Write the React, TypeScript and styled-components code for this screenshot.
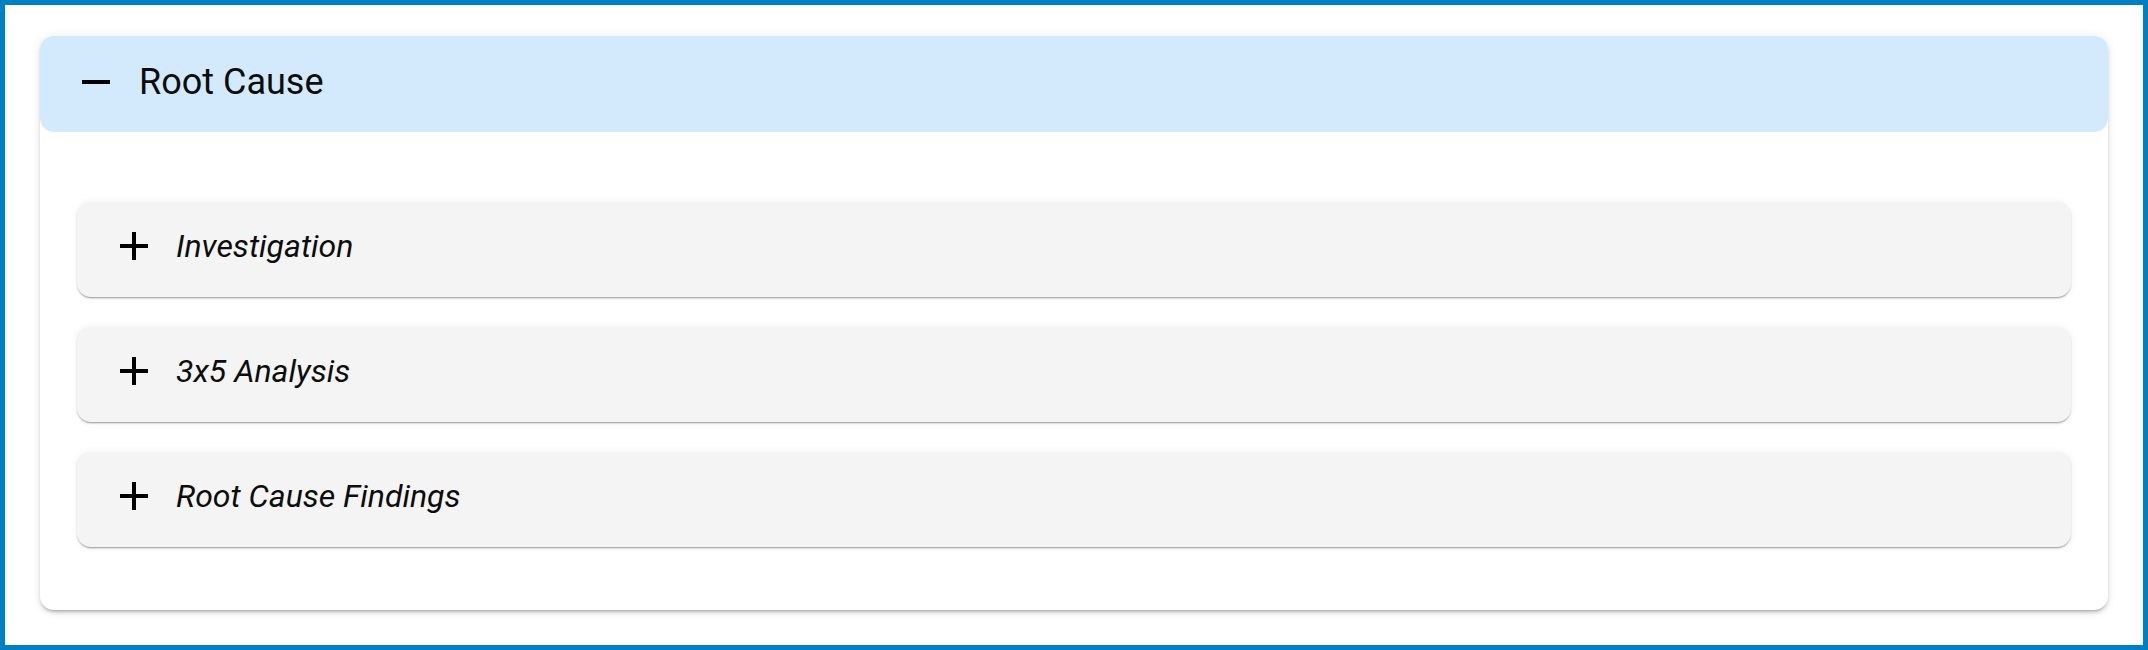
import React from "react";
import styled, { createGlobalStyle } from "styled-components";

const Global = createGlobalStyle`
  html, body { margin: 0; padding: 0; background: #ffffff; }
  body { font-family: Roboto, "Liberation Sans", sans-serif; }
  * { box-sizing: border-box; }
`;

const Frame = styled.div`
  width: 2148px;
  height: 650px;
  border: 5px solid #0080c3;
  background: #ffffff;
  padding: 31px 35px 0 35px;
`;

const Panel = styled.section`
  background: #ffffff;
  border-radius: 14px;
  box-shadow: 0 3px 3px -2px rgba(0, 0, 0, 0.24), 0 3px 4px 0 rgba(0, 0, 0, 0.12),
    0 1px 12px 0 rgba(0, 0, 0, 0.08);
  display: flex;
  flex-direction: column;
`;

const PanelHeader = styled.div`
  height: 96px;
  background: #d3eafd;
  border-radius: 14px;
  display: flex;
  align-items: center;
  padding: 0 0 4px 42px;
  gap: 29px;
`;

const PanelTitle = styled.span`
  font-size: 36px;
  font-weight: 400;
  color: #0d0d0d;
  line-height: 1;
`;

const PanelBody = styled.div`
  display: flex;
  flex-direction: column;
  gap: 30px;
  padding: 70px 37px 63px 37px;
`;

const SubCard = styled.div`
  height: 95px;
  background: #f4f4f4;
  border-radius: 14px;
  box-shadow: 0 2px 2px -1px rgba(0, 0, 0, 0.32), 0 1px 2px 0 rgba(0, 0, 0, 0.1),
    0 0 8px 0 rgba(0, 0, 0, 0.06);
  display: flex;
  align-items: center;
  padding: 0 0 7px 43px;
  gap: 28px;
`;

const SubTitle = styled.span`
  font-size: 32px;
  font-style: italic;
  color: #0d0d0d;
  line-height: 1;
`;

const IconBox = styled.svg`
  flex: none;
  display: block;
`;

const MinusIcon = () => (
  <IconBox width="28" height="28" viewBox="0 0 28 28">
    <rect x="0" y="12" width="28" height="4" fill="#000" />
  </IconBox>
);

const PlusIcon = () => (
  <IconBox width="28" height="28" viewBox="0 0 28 28">
    <rect x="0" y="12" width="28" height="4" fill="#000" />
    <rect x="12" y="0" width="4" height="28" fill="#000" />
  </IconBox>
);

const items = ["Investigation", "3x5 Analysis", "Root Cause Findings"];

export default function App() {
  return (
    <>
      <Global />
      <Frame>
        <Panel>
          <PanelHeader>
            <MinusIcon />
            <PanelTitle>Root Cause</PanelTitle>
          </PanelHeader>
          <PanelBody>
            {items.map((t) => (
              <SubCard key={t}>
                <PlusIcon />
                <SubTitle>{t}</SubTitle>
              </SubCard>
            ))}
          </PanelBody>
        </Panel>
      </Frame>
    </>
  );
}
